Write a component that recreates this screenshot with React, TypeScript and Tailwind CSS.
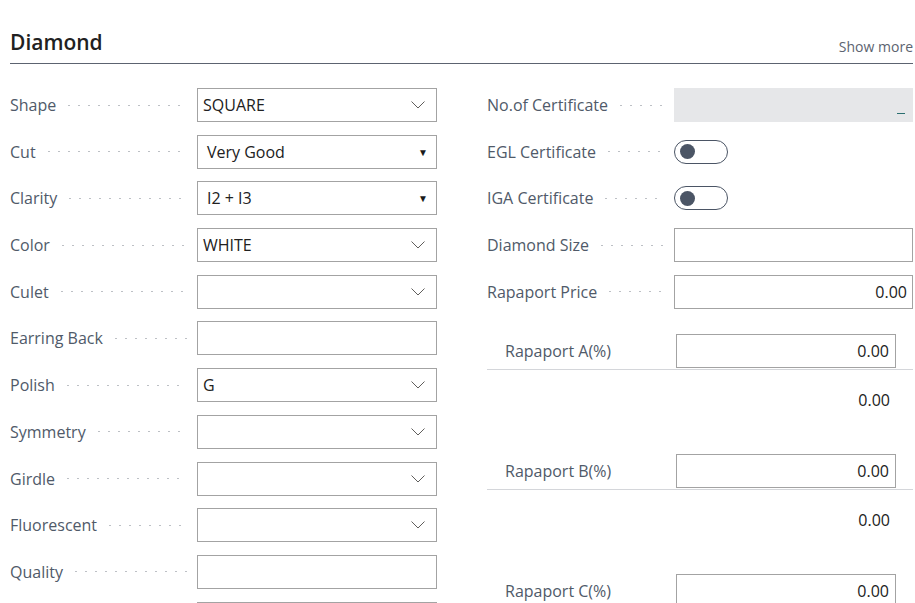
import React from "react";

const font = { fontFamily: '"Open Sans", "Noto Sans", sans-serif' };

function Dots() {
  return (
    <div className="flex-1 h-[3px] ml-[8px] mr-[10px] bg-[radial-gradient(circle,#bdc0c5_0.8px,transparent_1.1px)] bg-[length:10px_3px] bg-repeat-x" />
  );
}

function Chevron() {
  return (
    <svg width="14" height="8" viewBox="0 0 14 8" className="text-[#605e5c]">
      <path d="M0.5 0.5 L7 7 L13.5 0.5" fill="none" stroke="currentColor" strokeWidth="1" />
    </svg>
  );
}

function Triangle() {
  return <span className="text-[10px] text-[#1a1a1a] leading-none">▼</span>;
}

type Kind = "select" | "native" | "text" | "number" | "grey" | "toggle";

function Field({ kind, value }: { kind: Kind; value?: string }) {
  if (kind === "toggle") {
    return (
      <div className="h-[34px] flex items-center">
        <div className="w-[54px] h-[24px] rounded-full border border-[#4b5565] flex items-center pl-[5px]">
          <div className="w-[15px] h-[15px] rounded-full bg-[#4b5565]" />
        </div>
      </div>
    );
  }
  if (kind === "grey") {
    return (
      <div className="h-[34px] w-[240px] bg-[#e6e7e9] relative">
        <div className="absolute right-[8px] bottom-[8px] w-[8px] h-[1.5px] bg-[#2b6f70]" />
      </div>
    );
  }
  return (
    <div className="h-[34px] w-[240px] border border-[#a3a3a3] bg-white flex items-center text-[16px] text-[#212121]">
      {kind === "select" && (
        <>
          <span className="pl-[5px] flex-1">{value}</span>
          <span className="pr-[11px] flex items-center"><Chevron /></span>
        </>
      )}
      {kind === "native" && (
        <>
          <span className="pl-[9px] flex-1">{value}</span>
          <span className="pr-[8px] flex items-center"><Triangle /></span>
        </>
      )}
      {kind === "text" && <span className="pl-[5px] flex-1">{value}</span>}
      {kind === "number" && <span className="pr-[5px] flex-1 text-right">{value}</span>}
    </div>
  );
}

function Row({ label, kind, value }: { label: string; kind: Kind; value?: string }) {
  return (
    <div className="h-[46.7px] flex items-start">
      <div className="w-[187px] h-[34px] flex items-center text-[16px] text-[#505a69]">
        <span className="whitespace-nowrap">{label}</span>
        <Dots />
      </div>
      <Field kind={kind} value={value} />
    </div>
  );
}

function SubBlock({ label, last }: { label: string; last?: boolean }) {
  return (
    <div>
      <div className="h-[36px] border-b border-[#d4d6da] flex items-start">
        <span className="pl-[18px] h-[34px] flex items-center text-[16px] text-[#505a69] flex-1">{label}</span>
        <div className="w-[220px] h-[34px] mr-[17px] border border-[#a3a3a3] flex items-center justify-end pr-[6px] text-[16px] text-[#212121]">
          0.00
        </div>
      </div>
      {!last && (
        <div className="h-[84px] pt-[18px] pr-[23px] text-right text-[16px] text-[#212121]">0.00</div>
      )}
    </div>
  );
}

export default function App() {
  const left: { label: string; kind: Kind; value?: string }[] = [
    { label: "Shape", kind: "select", value: "SQUARE" },
    { label: "Cut", kind: "native", value: "Very Good" },
    { label: "Clarity", kind: "native", value: "I2 + I3" },
    { label: "Color", kind: "select", value: "WHITE" },
    { label: "Culet", kind: "select", value: "" },
    { label: "Earring Back", kind: "text", value: "" },
    { label: "Polish", kind: "select", value: "G" },
    { label: "Symmetry", kind: "select", value: "" },
    { label: "Girdle", kind: "select", value: "" },
    { label: "Fluorescent", kind: "select", value: "" },
    { label: "Quality", kind: "text", value: "" },
  ];
  const right: { label: string; kind: Kind; value?: string }[] = [
    { label: "No.of Certificate", kind: "grey" },
    { label: "EGL Certificate", kind: "toggle" },
    { label: "IGA Certificate", kind: "toggle" },
    { label: "Diamond Size", kind: "text", value: "" },
    { label: "Rapaport Price", kind: "number", value: "0.00" },
  ];
  return (
    <div style={font} className="w-[915px] h-[603px] overflow-hidden bg-white pl-[10px] pr-[2px]">
      <div className="h-[64px] border-b border-[#5c6370] flex items-end justify-between pb-[7px]">
        <span className="text-[21px] font-semibold text-[#212121] leading-none mb-[3px]">Diamond</span>
        <span className="text-[14px] text-[#5c6370] leading-none mb-[2px]">Show more</span>
      </div>
      <div className="flex gap-[50px] pt-[24px]">
        <div className="w-[427px] flex flex-col">
          {left.map((r) => (
            <Row key={r.label} {...r} />
          ))}
          <Row label="" kind="text" value="" />
        </div>
        <div className="w-[426px] flex flex-col">
          {right.map((r) => (
            <Row key={r.label} {...r} />
          ))}
          <div className="mt-[12.5px]">
            <SubBlock label="Rapaport A(%)" />
            <SubBlock label="Rapaport B(%)" />
            <SubBlock label="Rapaport C(%)" last />
          </div>
        </div>
      </div>
    </div>
  );
}
